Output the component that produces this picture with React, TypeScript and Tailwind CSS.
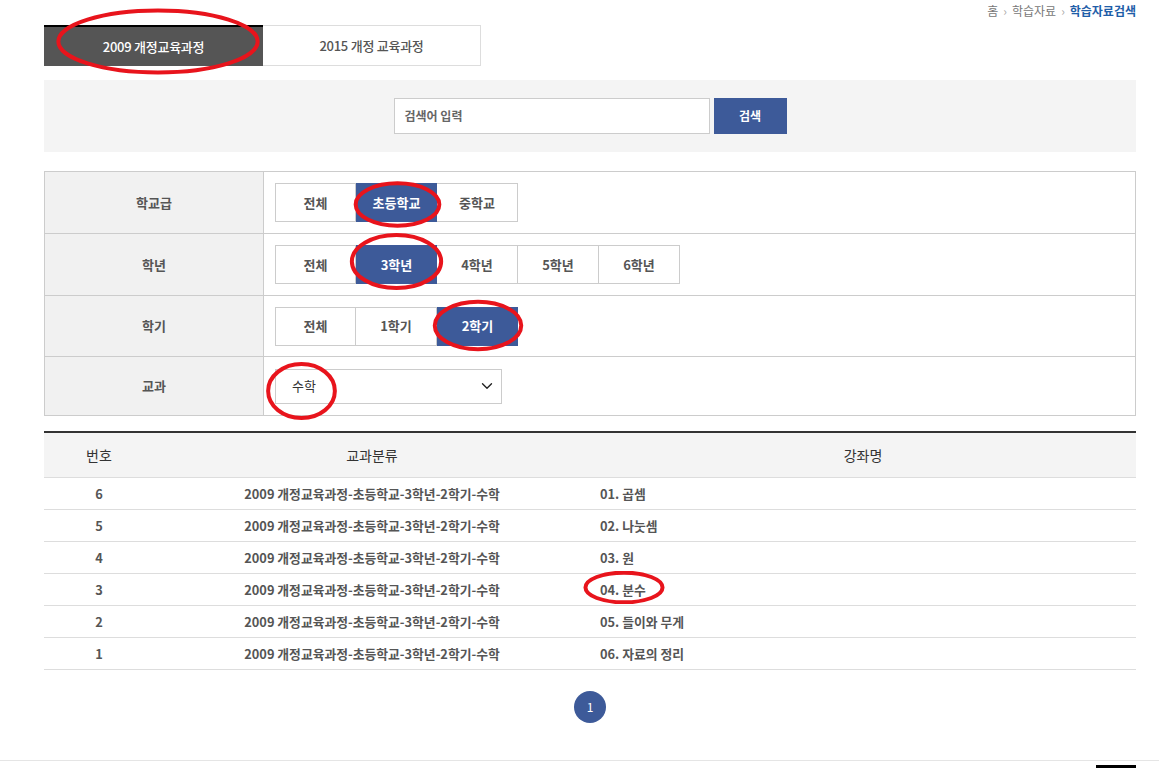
import React from 'react'
import { ChevronDown } from 'lucide-react'

const font = { fontFamily: '"Noto Sans CJK KR", "Noto Sans", sans-serif' }

const rows = [
  { no: 6, title: '01. 곱셈' },
  { no: 5, title: '02. 나눗셈' },
  { no: 4, title: '03. 원' },
  { no: 3, title: '04. 분수' },
  { no: 2, title: '05. 들이와 무게' },
  { no: 1, title: '06. 자료의 정리' },
]

function Ring({ className }: { className: string }) {
  return (
    <svg className={`pointer-events-none absolute ${className}`} viewBox="0 0 100 100" preserveAspectRatio="none">
      <ellipse cx="50" cy="50" rx="47" ry="45" fill="none" stroke="#e8141c" strokeWidth="4" vectorEffect="non-scaling-stroke" />
    </svg>
  )
}

function Options({ items, active }: { items: string[]; active: number }) {
  return (
    <div className="flex">
      {items.map((item, i) => (
        <div
          key={item}
          className={
            'flex h-[39px] w-[81px] items-center justify-center text-[13px] font-bold ' +
            (i === active
              ? 'bg-[#3d5a99] text-white'
              : 'border border-[#cccccc] text-[#555555] ' + (i > 0 ? 'border-l-0 ' : '') + (i === active + 1 ? 'border-l-0' : ''))
          }
        >
          {item}
        </div>
      ))}
    </div>
  )
}

function FilterRow({ label, children, h }: { label: string; children: React.ReactNode; h: string }) {
  return (
    <div className={`flex border-b border-[#cccccc] last:border-b-0 ${h}`}>
      <div className="flex w-[219px] shrink-0 items-center justify-center border-r border-[#cccccc] bg-[#f1f1f1] text-[13px] font-bold text-[#555555]">
        {label}
      </div>
      <div className="flex items-center pl-[11px]">{children}</div>
    </div>
  )
}

export default function App() {
  return (
    <div className="relative min-h-[768px] w-[1159px] overflow-hidden bg-white" style={font}>
      <div className="ml-[44px] w-[1092px]">
        {/* breadcrumb */}
        <div className="flex h-[25px] items-start justify-end gap-[5px] pt-[2px] text-[12px] text-[#777777]">
          <span>홈</span>
          <span className="text-[#aaaaaa]">›</span>
          <span>학습자료</span>
          <span className="text-[#aaaaaa]">›</span>
          <span className="font-bold text-[#1f5ea8]">학습자료검색</span>
        </div>

        {/* tabs */}
        <div className="flex h-[41px]">
          <div className="flex w-[219px] items-center justify-center border-t-2 border-black bg-[#555555] text-[13px] font-medium tracking-[-0.02em] text-white">
            2009 개정교육과정
          </div>
          <div className="flex w-[218px] items-center justify-center border border-l-0 border-[#dddddd] text-[13px] font-medium tracking-[-0.02em] text-[#555555]">
            2015 개정 교육과정
          </div>
        </div>

        {/* search */}
        <div className="mt-[14px] flex h-[72px] items-center justify-center bg-[#f4f4f4]">
          <div className="flex h-[36px] w-[316px] items-center border border-[#cccccc] bg-white pl-[10px] text-[12px] font-bold text-[#666666]">
            검색어 입력
          </div>
          <div className="ml-[4px] flex h-[36px] w-[73px] items-center justify-center bg-[#3d5a99] text-[12px] font-bold text-white">
            검색
          </div>
        </div>

        {/* filters */}
        <div className="mt-[19px] border border-[#cccccc]">
          <FilterRow label="학교급" h="h-[62px]">
            <Options items={['전체', '초등학교', '중학교']} active={1} />
          </FilterRow>
          <FilterRow label="학년" h="h-[62px]">
            <Options items={['전체', '3학년', '4학년', '5학년', '6학년']} active={1} />
          </FilterRow>
          <FilterRow label="학기" h="h-[61px]">
            <Options items={['전체', '1학기', '2학기']} active={2} />
          </FilterRow>
          <FilterRow label="교과" h="h-[58px]">
            <div className="flex h-[35px] w-[227px] items-center justify-between border border-[#cccccc] pl-[16px] pr-[5px] text-[13px] text-[#333333]">
              <span>수학</span>
              <ChevronDown className="h-[18px] w-[18px] text-[#222222]" strokeWidth={1.8} />
            </div>
          </FilterRow>
        </div>

        {/* list */}
        <div className="mt-[15px] border-t-2 border-[#333333]">
          <div className="flex h-[45px] items-center border-b border-[#dddddd] bg-[#f4f4f4] text-[14px] text-[#333333]">
            <div className="w-[110px] text-center">번호</div>
            <div className="w-[436px] text-center">교과분류</div>
            <div className="flex-1 text-center">강좌명</div>
          </div>
          {rows.map((r) => (
            <div key={r.no} className="flex h-[32px] items-center border-b border-[#dddddd] text-[12.8px] font-bold text-[#555555]">
              <div className="w-[110px] text-center">{r.no}</div>
              <div className="w-[436px] text-center">2009 개정교육과정-초등학교-3학년-2학기-수학</div>
              <div className="flex-1 pl-[10px]">{r.title}</div>
            </div>
          ))}
        </div>

        {/* pagination */}
        <div className="mt-[21px] flex justify-center">
          <div className="flex h-[32px] w-[32px] items-center justify-center rounded-full bg-[#3d5a99] text-[12px] text-white">
            1
          </div>
        </div>
      </div>

      {/* footer line */}
      <div className="mt-[37px] border-t border-[#e5e5e5]">
        <div className="ml-[1096px] mt-[4px] h-[3px] w-[40px] bg-black" />
      </div>

      {/* annotation rings */}
      <Ring className="left-[52px] top-[7px] h-[69px] w-[212px]" />
      <Ring className="left-[353px] top-[181px] h-[47px] w-[89px]" />
      <Ring className="left-[349px] top-[232px] h-[59px] w-[95px]" />
      <Ring className="left-[432px] top-[299px] h-[53px] w-[92px]" />
      <Ring className="left-[266px] top-[361px] h-[60px] w-[71px]" />
      <Ring className="left-[583px] top-[571px] h-[33px] w-[82px]" />
    </div>
  )
}
